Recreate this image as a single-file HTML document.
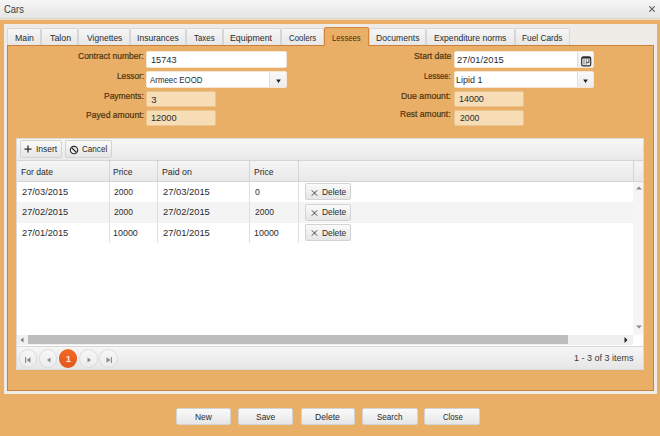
<!DOCTYPE html>
<html><head><meta charset="utf-8">
<style>
*{box-sizing:border-box;margin:0;padding:0}
html,body{width:660px;height:436px;overflow:hidden}
body{background:#e9af66;font-family:"Liberation Sans",sans-serif;position:relative}
.b,.t{position:absolute}
.t{white-space:pre;line-height:normal;transform-origin:0 0}
.btn{border:1px solid #d3d3d3;border-radius:2px;background:linear-gradient(#fafafa,#e6e6e6)}
.tab{border:1px solid #d6d6d6;border-bottom:none;border-radius:2px 2px 0 0;background:linear-gradient(#f6f6f6,#e7e7e7)}
.inp{background:#fff;border:1px solid #f4e6d4;border-radius:2px}
.ro{background:#f7ddb5;border:1px solid #ebc590;border-radius:2px}
.circ{border:1px solid #dcdcdc;border-radius:50%;background:linear-gradient(#f7f7f7,#ececec)}
</style></head><body>
<div class="b" style="left:0px;top:0px;width:660px;height:18px;background:linear-gradient(#f5f6f5,#e4e6e4)"></div>
<div class="b" style="left:0px;top:18px;width:660px;height:1px;background:#dcd6d6"></div>
<div class="b" style="left:0px;top:19px;width:660px;height:1px;background:#f0dccb"></div>
<span class="t" style="left:3.7px;top:3px;font-size:10.5px;transform:scaleX(0.895);color:#3a3a3a;">Cars</span>
<svg class="b" style="left:648.5px;top:6px" width="6" height="6" viewBox="0 0 6 6"><path d="M0.3 0.3L5.7 5.7M5.7 0.3L0.3 5.7" stroke="#606060" stroke-width="1.15"/></svg>
<div class="b" style="left:4px;top:24px;width:653px;height:370px;background:#efebe7"></div>
<div class="b" style="left:7px;top:45px;width:647px;height:346px;background:#e9af66;border:1px solid #c98140"></div>
<div class="b tab" style="left:7px;top:28px;width:34px;height:17px;"></div>
<span class="t" style="left:14.58px;top:32px;font-size:9.5px;transform:scaleX(0.921);color:#2b2b2b;">Main</span>
<div class="b tab" style="left:41px;top:28px;width:37px;height:17px;"></div>
<span class="t" style="left:49.5px;top:32px;font-size:9.5px;transform:scaleX(0.932);color:#2b2b2b;">Talon</span>
<div class="b tab" style="left:78px;top:28px;width:52px;height:17px;"></div>
<span class="t" style="left:86.75px;top:32px;font-size:9.5px;transform:scaleX(0.897);color:#2b2b2b;">Vignettes</span>
<div class="b tab" style="left:130px;top:28px;width:56px;height:17px;"></div>
<span class="t" style="left:136.6px;top:32px;font-size:9.5px;transform:scaleX(0.9);color:#2b2b2b;">Insurances</span>
<div class="b tab" style="left:186px;top:28px;width:37px;height:17px;"></div>
<span class="t" style="left:194.25px;top:32px;font-size:9.5px;transform:scaleX(0.83);color:#2b2b2b;">Taxes</span>
<div class="b tab" style="left:223px;top:28px;width:57.5px;height:17px;"></div>
<span class="t" style="left:230.32px;top:32px;font-size:9.5px;transform:scaleX(0.926);color:#2b2b2b;">Equipment</span>
<div class="b tab" style="left:280.5px;top:28px;width:43.5px;height:17px;"></div>
<span class="t" style="left:288.75px;top:32px;font-size:9.5px;transform:scaleX(0.833);color:#2b2b2b;">Coolers</span>
<div class="b tab" style="left:324px;top:27px;width:45px;height:19px;background:#e9af66;border-color:#d6843c"></div>
<span class="t" style="left:332.19px;top:32px;font-size:9.5px;transform:scaleX(0.809);color:#4a2e10;">Lessees</span>
<div class="b tab" style="left:369px;top:28px;width:57px;height:17px;"></div>
<span class="t" style="left:375.85px;top:32px;font-size:9.5px;transform:scaleX(0.904);color:#2b2b2b;">Documents</span>
<div class="b tab" style="left:426px;top:28px;width:88.5px;height:17px;"></div>
<span class="t" style="left:434.09px;top:32px;font-size:9.5px;transform:scaleX(0.908);color:#2b2b2b;">Expenditure norms</span>
<div class="b tab" style="left:514.5px;top:28px;width:55.0px;height:17px;"></div>
<span class="t" style="left:521.63px;top:32px;font-size:9.5px;transform:scaleX(0.872);color:#2b2b2b;">Fuel Cards</span>
<div class="b inp" style="left:145.75px;top:50.5px;width:140.75px;height:17.0px;"></div>
<div class="b inp" style="left:145.75px;top:70.5px;width:140.75px;height:17.5px;"></div>
<div class="b" style="left:269px;top:71.5px;width:16.5px;height:15.5px;background:linear-gradient(#f9f9f9,#ececec);border-left:1px solid #dedede"></div>
<svg class="b" style="left:275px;top:78.5px" width="7" height="5" viewBox="0 0 7 5"><path d="M1.2 0.6H5.8L3.5 4z" fill="#222"/></svg>
<div class="b ro" style="left:145.75px;top:90.5px;width:70.0px;height:16.25px;"></div>
<div class="b ro" style="left:145.75px;top:110px;width:70.0px;height:16px;"></div>
<div class="b inp" style="left:453.75px;top:50.5px;width:140.25px;height:17.5px;"></div>
<div class="b" style="left:577px;top:51.5px;width:16px;height:15.5px;background:linear-gradient(#f9f9f9,#ececec);border-left:1px solid #dedede"></div>
<svg class="b" style="left:581px;top:56px" width="11" height="11" viewBox="0 0 11 11"><rect x="0.7" y="0.9" width="9" height="8.9" rx="1.6" fill="none" stroke="#2f2f2f" stroke-width="1.2"/><path d="M0.8 1.8H9.6" stroke="#2f2f2f" stroke-width="1.6"/><path d="M3 3.2V8.6M5.3 3.2V8.6" stroke="#777" stroke-width="0.9"/><path d="M7.9 3.2V6.6H5.6" fill="none" stroke="#2f2f2f" stroke-width="0.9"/></svg>
<div class="b inp" style="left:453.75px;top:70.5px;width:140.25px;height:17.5px;"></div>
<div class="b" style="left:577px;top:71.5px;width:16px;height:15.5px;background:linear-gradient(#f9f9f9,#ececec);border-left:1px solid #dedede"></div>
<svg class="b" style="left:582.4px;top:78.5px" width="7" height="5" viewBox="0 0 7 5"><path d="M1.2 0.6H5.8L3.5 4z" fill="#222"/></svg>
<div class="b ro" style="left:453.75px;top:90.5px;width:70.0px;height:16.25px;"></div>
<div class="b ro" style="left:453.75px;top:110px;width:70.0px;height:16px;"></div>
<span class="t" style="left:78.0px;top:50px;font-size:9.5px;transform:scaleX(0.894);color:#4a3312;-webkit-text-stroke:0.2px #4a3312">Contract number:</span>
<span class="t" style="left:117.13px;top:70px;font-size:9.5px;transform:scaleX(0.871);color:#4a3312;-webkit-text-stroke:0.2px #4a3312">Lessor:</span>
<span class="t" style="left:104.11px;top:90px;font-size:9.5px;transform:scaleX(0.89);color:#4a3312;-webkit-text-stroke:0.2px #4a3312">Payments:</span>
<span class="t" style="left:86.09px;top:109px;font-size:9.5px;transform:scaleX(0.907);color:#4a3312;-webkit-text-stroke:0.2px #4a3312">Payed amount:</span>
<span class="t" style="left:414.09px;top:50px;font-size:9.5px;transform:scaleX(0.906);color:#4a3312;-webkit-text-stroke:0.2px #4a3312">Start date</span>
<span class="t" style="left:424.2px;top:70px;font-size:9.5px;transform:scaleX(0.797);color:#4a3312;-webkit-text-stroke:0.2px #4a3312">Lessee:</span>
<span class="t" style="left:401.08px;top:90px;font-size:9.5px;transform:scaleX(0.915);color:#4a3312;-webkit-text-stroke:0.2px #4a3312">Due amount:</span>
<span class="t" style="left:400.36px;top:108px;font-size:9.5px;transform:scaleX(0.895);color:#4a3312;-webkit-text-stroke:0.2px #4a3312">Rest amount:</span>
<span class="t" style="left:151.03px;top:54px;font-size:9.5px;transform:scaleX(0.97);color:#2a2a2a;">15743</span>
<span class="t" style="left:149.5px;top:74px;font-size:9.5px;transform:scaleX(0.829);color:#2a2a2a;">Armeec EOOD</span>
<span class="t" style="left:151.25px;top:94px;font-size:9.5px;transform:scaleX(1.0);color:#2a2a2a;">3</span>
<span class="t" style="left:151.03px;top:112px;font-size:9.5px;transform:scaleX(0.97);color:#2a2a2a;">12000</span>
<span class="t" style="left:457.0px;top:54px;font-size:9.5px;transform:scaleX(0.984);color:#2a2a2a;">27/01/2015</span>
<span class="t" style="left:456.06px;top:74px;font-size:9.5px;transform:scaleX(0.944);color:#2a2a2a;">Lipid 1</span>
<span class="t" style="left:458.56px;top:93px;font-size:9.5px;transform:scaleX(0.94);color:#2a2a2a;">14000</span>
<span class="t" style="left:459.5px;top:112px;font-size:9.5px;transform:scaleX(0.917);color:#2a2a2a;">2000</span>
<div class="b" style="left:15.7px;top:138px;width:628.6999999999999px;height:232px;background:#fff;border:1px solid #d9d9d9"></div>
<div class="b" style="left:16.7px;top:139px;width:626.6999999999999px;height:21.5px;background:linear-gradient(#f7f7f7,#e9e9e9);border-bottom:1px solid #d5d5d5"></div>
<div class="b btn" style="left:19.5px;top:140.2px;width:42.8px;height:17.5px;"></div>
<svg class="b" style="left:24px;top:145px" width="8" height="8" viewBox="0 0 8 8"><path d="M4 0.5V7.5M0.5 4H7.5" stroke="#2a2a2a" stroke-width="1.25"/></svg>
<span class="t" style="left:35.61px;top:143px;font-size:9.5px;transform:scaleX(0.891);color:#2a2a2a;">Insert</span>
<div class="b btn" style="left:65.3px;top:140.2px;width:47.0px;height:17.5px;"></div>
<svg class="b" style="left:69px;top:144.5px" width="10" height="10" viewBox="0 0 10 10"><circle cx="5" cy="5" r="3.7" fill="none" stroke="#2a2a2a" stroke-width="1.15"/><path d="M2.5 2.5L7.5 7.5" stroke="#2a2a2a" stroke-width="1.15"/></svg>
<span class="t" style="left:82.3px;top:143px;font-size:9.5px;transform:scaleX(0.852);color:#2a2a2a;">Cancel</span>
<div class="b" style="left:16.7px;top:160.5px;width:626.6999999999999px;height:21.0px;background:linear-gradient(#f5f5f5,#e8e8e8);border-bottom:1px solid #d3d3d3"></div>
<div class="b" style="left:108.5px;top:160.5px;width:1.0px;height:21.0px;background:#d5d5d5"></div>
<div class="b" style="left:157.3px;top:160.5px;width:1.0px;height:21.0px;background:#d5d5d5"></div>
<div class="b" style="left:249.4px;top:160.5px;width:1.0px;height:21.0px;background:#d5d5d5"></div>
<div class="b" style="left:298.4px;top:160.5px;width:1.0px;height:21.0px;background:#d5d5d5"></div>
<div class="b" style="left:632.6px;top:160.5px;width:1.0px;height:21.0px;background:#d5d5d5"></div>
<span class="t" style="left:20.6px;top:166px;font-size:9.5px;transform:scaleX(0.904);color:#2a2a2a;">For date</span>
<span class="t" style="left:113.1px;top:166px;font-size:9.5px;transform:scaleX(0.9);color:#2a2a2a;">Price</span>
<span class="t" style="left:162.07px;top:166px;font-size:9.5px;transform:scaleX(0.927);color:#2a2a2a;">Paid on</span>
<span class="t" style="left:254.1px;top:166px;font-size:9.5px;transform:scaleX(0.9);color:#2a2a2a;">Price</span>
<div class="b" style="left:16.7px;top:202px;width:615.9px;height:20.5px;background:#f4f4f4"></div>
<div class="b" style="left:108.5px;top:181.5px;width:1.0px;height:61.0px;background:#e0e0e0"></div>
<div class="b" style="left:157.3px;top:181.5px;width:1.0px;height:61.0px;background:#e0e0e0"></div>
<div class="b" style="left:249.4px;top:181.5px;width:1.0px;height:61.0px;background:#e0e0e0"></div>
<div class="b" style="left:298.4px;top:181.5px;width:1.0px;height:61.0px;background:#e0e0e0"></div>
<span class="t" style="left:21.5px;top:186px;font-size:9.5px;transform:scaleX(0.973);color:#2a2a2a;">27/03/2015</span>
<span class="t" style="left:114.0px;top:186px;font-size:9.5px;transform:scaleX(0.893);color:#2a2a2a;">2000</span>
<span class="t" style="left:163.0px;top:186px;font-size:9.5px;transform:scaleX(0.984);color:#2a2a2a;">27/03/2015</span>
<span class="t" style="left:255.0px;top:186px;font-size:9.5px;transform:scaleX(0.92);color:#2a2a2a;">0</span>
<div class="b btn" style="left:305.1px;top:183px;width:45.69999999999999px;height:17px;"></div>
<svg class="b" style="left:310.5px;top:189.5px" width="7" height="6" viewBox="0 0 7 6"><path d="M0.8 0.3L6.2 5.7M6.2 0.3L0.8 5.7" stroke="#333" stroke-width="0.9"/></svg>
<span class="t" style="left:321.87px;top:186px;font-size:9.5px;transform:scaleX(0.883);color:#2a2a2a;">Delete</span>
<span class="t" style="left:21.5px;top:206px;font-size:9.5px;transform:scaleX(0.973);color:#2a2a2a;">27/02/2015</span>
<span class="t" style="left:114.0px;top:206px;font-size:9.5px;transform:scaleX(0.893);color:#2a2a2a;">2000</span>
<span class="t" style="left:163.0px;top:206px;font-size:9.5px;transform:scaleX(0.984);color:#2a2a2a;">27/02/2015</span>
<span class="t" style="left:255.0px;top:206px;font-size:9.5px;transform:scaleX(0.893);color:#2a2a2a;">2000</span>
<div class="b btn" style="left:305.1px;top:203.7px;width:45.69999999999999px;height:17.0px;"></div>
<svg class="b" style="left:310.5px;top:210.2px" width="7" height="6" viewBox="0 0 7 6"><path d="M0.8 0.3L6.2 5.7M6.2 0.3L0.8 5.7" stroke="#333" stroke-width="0.9"/></svg>
<span class="t" style="left:321.87px;top:206px;font-size:9.5px;transform:scaleX(0.883);color:#2a2a2a;">Delete</span>
<span class="t" style="left:21.5px;top:227px;font-size:9.5px;transform:scaleX(0.973);color:#2a2a2a;">27/01/2015</span>
<span class="t" style="left:113.06px;top:227px;font-size:9.5px;transform:scaleX(0.94);color:#2a2a2a;">10000</span>
<span class="t" style="left:163.0px;top:227px;font-size:9.5px;transform:scaleX(0.984);color:#2a2a2a;">27/01/2015</span>
<span class="t" style="left:254.06px;top:227px;font-size:9.5px;transform:scaleX(0.94);color:#2a2a2a;">10000</span>
<div class="b btn" style="left:305.1px;top:223.7px;width:45.69999999999999px;height:17.0px;"></div>
<svg class="b" style="left:310.5px;top:230.2px" width="7" height="6" viewBox="0 0 7 6"><path d="M0.8 0.3L6.2 5.7M6.2 0.3L0.8 5.7" stroke="#333" stroke-width="0.9"/></svg>
<span class="t" style="left:321.87px;top:227px;font-size:9.5px;transform:scaleX(0.883);color:#2a2a2a;">Delete</span>
<div class="b" style="left:632.6px;top:181.5px;width:10.799999999999955px;height:153.0px;background:#f5f5f5"></div>
<svg class="b" style="left:635.5px;top:186px" width="6" height="4" viewBox="0 0 6 4"><path d="M0 3.5H6L3 0.5z" fill="#8a8a8a"/></svg>
<svg class="b" style="left:635.5px;top:325px" width="6" height="4" viewBox="0 0 6 4"><path d="M0 0.5H6L3 3.5z" fill="#8a8a8a"/></svg>
<div class="b" style="left:16.7px;top:334.5px;width:615.9px;height:10.5px;background:#f0f0f0"></div>
<div class="b" style="left:28.2px;top:335.3px;width:539.8px;height:8.5px;background:#bdbdbd;border-radius:1px"></div>
<svg class="b" style="left:19.5px;top:337px" width="4" height="6" viewBox="0 0 4 6"><path d="M3.5 0.5V5.5L0.5 3z" fill="#777"/></svg>
<svg class="b" style="left:624px;top:337px" width="4" height="6" viewBox="0 0 4 6"><path d="M0.5 0V6L3.5 3z" fill="#222"/></svg>
<div class="b" style="left:632.6px;top:334.5px;width:10.799999999999955px;height:10.5px;background:#fff"></div>
<div class="b" style="left:16.7px;top:345.5px;width:626.6999999999999px;height:23.5px;background:linear-gradient(#f6f6f6,#e6e6e6);border-top:1px solid #d8d8d8"></div>
<div class="b circ" style="left:18.9px;top:349.2px;width:18.6px;height:18.6px"></div>
<div class="b circ" style="left:38.5px;top:349.2px;width:18.6px;height:18.6px"></div>
<div class="b" style="left:58.900000000000006px;top:349.2px;width:18.6px;height:18.6px;border-radius:50%;background:linear-gradient(#f26a26,#e4561a)"></div>
<span class="t" style="left:65.7px;top:353px;font-size:9.5px;color:#fde8d8;font-weight:bold">1</span>
<div class="b circ" style="left:79.3px;top:349.2px;width:18.6px;height:18.6px"></div>
<div class="b circ" style="left:99.3px;top:349.2px;width:18.6px;height:18.6px"></div>
<svg class="b" style="left:25px;top:356.5px" width="6" height="6" viewBox="0 0 6 6"><path d="M0.6 0V6" stroke="#8a8a8a" stroke-width="1.1"/><path d="M5.5 0.3V5.7L1.5 3z" fill="#8a8a8a"/></svg>
<svg class="b" style="left:45.5px;top:356.5px" width="5" height="6" viewBox="0 0 5 6"><path d="M4.5 0.5V5.5L1 3z" fill="#8a8a8a"/></svg>
<svg class="b" style="left:86.5px;top:356.5px" width="5" height="6" viewBox="0 0 5 6"><path d="M0.5 0.5V5.5L4 3z" fill="#8a8a8a"/></svg>
<svg class="b" style="left:105.5px;top:356.5px" width="6" height="6" viewBox="0 0 6 6"><path d="M0.5 0.3V5.7L4.5 3z" fill="#8a8a8a"/><path d="M5.4 0V6" stroke="#8a8a8a" stroke-width="1.1"/></svg>
<span class="t" style="left:573.76px;top:352px;font-size:9.5px;transform:scaleX(0.945);color:#3a3a3a;">1 - 3 of 3 items</span>
<div class="b btn" style="left:176.25px;top:407.5px;width:55.0px;height:17.5px;"></div>
<span class="t" style="left:194.86px;top:411px;font-size:9.5px;transform:scaleX(0.889);color:#2a2a2a;">New</span>
<div class="b btn" style="left:238px;top:407.5px;width:55.25px;height:17.5px;"></div>
<span class="t" style="left:255.86px;top:411px;font-size:9.5px;transform:scaleX(0.888);color:#2a2a2a;">Save</span>
<div class="b btn" style="left:300.5px;top:407.5px;width:54.5px;height:17.5px;"></div>
<span class="t" style="left:314.85px;top:411px;font-size:9.5px;transform:scaleX(0.904);color:#2a2a2a;">Delete</span>
<div class="b btn" style="left:362px;top:407.5px;width:55.5px;height:17.5px;"></div>
<span class="t" style="left:376.66px;top:411px;font-size:9.5px;transform:scaleX(0.845);color:#2a2a2a;">Search</span>
<div class="b btn" style="left:424.25px;top:407.5px;width:55.25px;height:17.5px;"></div>
<span class="t" style="left:442.5px;top:411px;font-size:9.5px;transform:scaleX(0.812);color:#2a2a2a;">Close</span>
</body></html>
